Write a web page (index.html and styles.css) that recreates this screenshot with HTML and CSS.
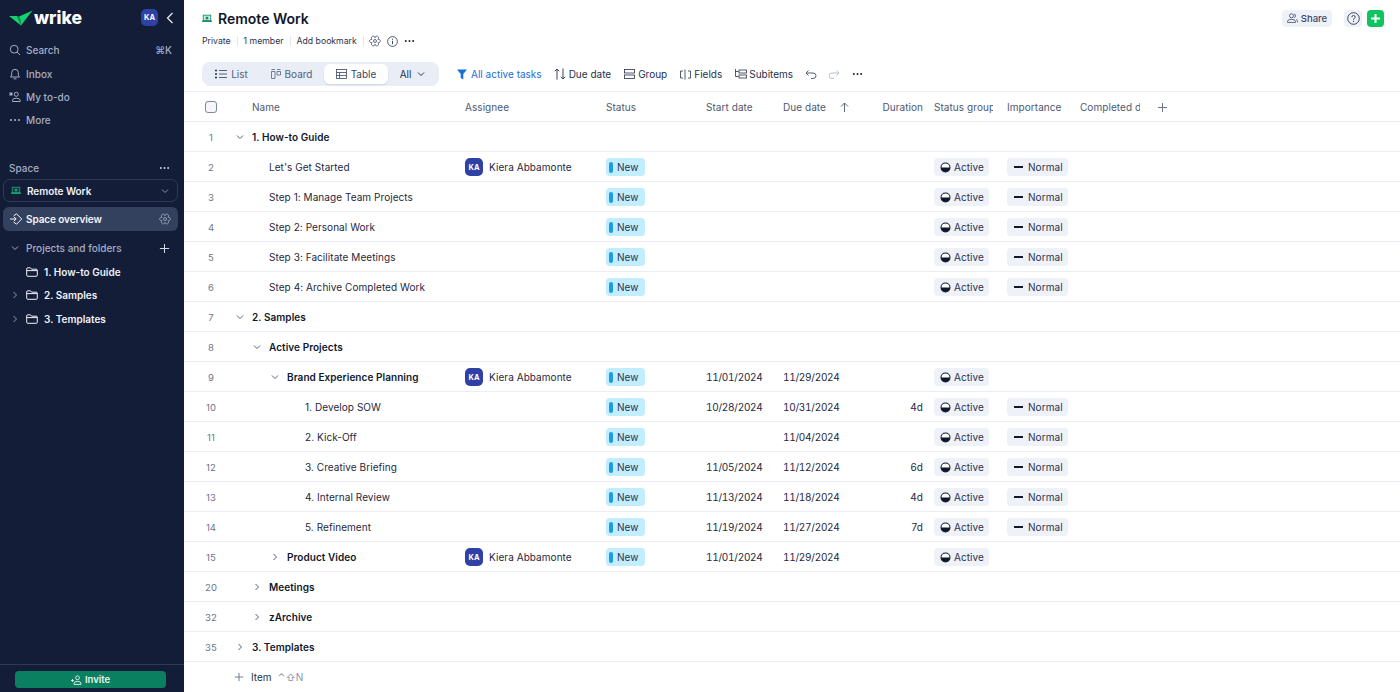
FILE: index.html
```html
<!DOCTYPE html>
<html lang="en">
<head>
<meta charset="utf-8">
<title>Remote Work</title>
<link rel="stylesheet" href="styles.css">
</head>
<body>
<svg class="defs" width="0" height="0" aria-hidden="true">
  <symbol id="down" viewBox="0 0 8 8"><path d="M1 2.5 4 5.5 7 2.5" fill="none" stroke="currentColor" stroke-width="1"/></symbol>
  <symbol id="right" viewBox="0 0 8 8"><path d="M2.5 1 5.5 4 2.5 7" fill="none" stroke="currentColor" stroke-width="1"/></symbol>
  <symbol id="plus" viewBox="0 0 12 12"><path d="M6 1v10M1 6h10" fill="none" stroke="currentColor" stroke-width="1.1"/></symbol>
  <symbol id="dots" viewBox="0 0 12 4"><circle cx="2" cy="2" r="1.1" fill="currentColor"/><circle cx="6" cy="2" r="1.1" fill="currentColor"/><circle cx="10" cy="2" r="1.1" fill="currentColor"/></symbol>
  <symbol id="folder" viewBox="0 0 12 10"><path d="M.7 2V8.2Q.7 9.3 1.8 9.3H10.2Q11.3 9.3 11.3 8.2V3.2Q11.3 2.2 10.2 2.2H5.6L4.4.8H1.8Q.7.8.7 2ZM.7 3.6H11.3" fill="none" stroke="currentColor" stroke-width="1"/></symbol>
  <symbol id="gear" viewBox="0 0 12 12"><path d="M8.94 4.3A1.8 1.8 0 1 1 8.94 7.7 1.8 1.8 0 1 1 6 9.4 1.8 1.8 0 1 1 3.06 7.7 1.8 1.8 0 1 1 3.06 4.3 1.8 1.8 0 1 1 6 2.6 1.8 1.8 0 1 1 8.94 4.3Z" fill="none" stroke="currentColor" stroke-width=".8"/><circle cx="6" cy="6" r="1.5" fill="none" stroke="currentColor" stroke-width=".8"/></symbol>
  <symbol id="half" viewBox="0 0 12 12"><circle cx="6" cy="6" r="4.9" fill="#fff" stroke="#10182c" stroke-width="1.1"/><path d="M1 6a5 5 0 0 0 10 0Z" fill="#10182c"/></symbol>
  <symbol id="space" viewBox="0 0 12 10"><rect class="screen" x="1.5" y="1" width="9" height="6.5"/><rect class="screen-base" x="0" y="7.5" width="12" height="1.6"/><rect class="screen-base" x="4.5" y="3" width="3" height="3"/></symbol>
</svg>

<div class="app">
  <aside class="sidebar">
    <div class="logo-row">
      <svg class="logo-mark" width="24" height="16" viewBox="0 0 24 16"><path d="M0 6H8L12 10.500V15.500Z" fill="#13d16d"/><path d="M10 6.500 23.500 .5 12 15.500Z" fill="#13d16d"/><path d="M8 6 10 6.500 12 10.500 12 15.500 9 9Z" fill="#0a8f50"/></svg>
      <span class="logo-text">wrike</span>
      <span class="avatar side-avatar">KA</span>
      <svg class="collapse" width="8" height="12" viewBox="0 0 8 12"><path d="M6.5 1 1.5 6 6.5 11" fill="none" stroke="currentColor" stroke-width="1.3"/></svg>
    </div>
    <nav class="nav">
      <div class="nav-item">
        <svg class="nav-icon" width="12" height="12" viewBox="0 0 12 12"><circle cx="5.2" cy="5.2" r="3.9" fill="none" stroke="currentColor"/><path d="M8 8 11 11" stroke="currentColor"/></svg>
        <span>Search</span><span class="shortcut">⌘K</span>
      </div>
      <div class="nav-item">
        <svg class="nav-icon" width="12" height="12" viewBox="0 0 12 12"><path d="M1.5 9h9L9.3 7.2V4.6a3.3 3.3 0 0 0-6.6 0v2.6ZM4.6 10.8h2.8" fill="none" stroke="currentColor"/></svg>
        <span>Inbox</span>
      </div>
      <div class="nav-item">
        <svg class="nav-icon" width="12" height="12" viewBox="0 0 12 12"><circle cx="7.3" cy="3.3" r="2" fill="none" stroke="currentColor"/><path d="M3.5 10.5V9.3Q3.5 7.2 7.3 7.2T11.2 9.3V10.5Z" fill="none" stroke="currentColor"/><rect x=".5" y="1.5" width="3" height="3" fill="currentColor"/></svg>
        <span>My to-do</span>
      </div>
      <div class="nav-item">
        <svg class="nav-icon" width="10" height="4" viewBox="0 0 12 4"><use href="#dots"/></svg>
        <span>More</span>
      </div>
    </nav>
    <div class="space-head"><span>Space</span><svg class="dots-icon" width="11" height="4"><use href="#dots"/></svg></div>
    <div class="space-select">
      <svg width="10" height="9"><use href="#space"/></svg>
      <span>Remote Work</span>
      <svg class="select-chev" width="8" height="8"><use href="#down"/></svg>
    </div>
    <div class="space-overview">
      <svg width="13" height="12" viewBox="0 0 13 12"><path d="M0 6H6M4 4 6.2 6 4 8M3.5 3 6.5.8 11.7 6 6.5 11.2 3.5 9" fill="none" stroke="currentColor"/></svg>
      <span>Space overview</span>
      <svg class="overview-gear" width="12" height="12"><use href="#gear"/></svg>
    </div>
    <div class="tree-head">
      <svg width="8" height="8"><use href="#down"/></svg>
      <span>Projects and folders</span>
      <svg class="tree-plus" width="11" height="11"><use href="#plus"/></svg>
    </div>
    <div class="tree-item"><span class="tree-chev"></span><svg width="12" height="10"><use href="#folder"/></svg><span>1. How-to Guide</span></div>
    <div class="tree-item"><svg class="tree-chev" width="8" height="8"><use href="#right"/></svg><svg width="12" height="10"><use href="#folder"/></svg><span>2. Samples</span></div>
    <div class="tree-item"><svg class="tree-chev" width="8" height="8"><use href="#right"/></svg><svg width="12" height="10"><use href="#folder"/></svg><span>3. Templates</span></div>
    <div class="invite-bar">
      <button class="invite">
        <svg width="11" height="10" viewBox="0 0 11 10"><circle cx="6.5" cy="2.8" r="1.9" fill="none" stroke="currentColor" stroke-width=".9"/><path d="M3 9.4V8.4Q3 6.4 6.5 6.4T10 8.4V9.4ZM0 5.5H3M1.5 4V7" fill="none" stroke="currentColor" stroke-width=".9"/></svg>
        Invite
      </button>
    </div>
  </aside>

  <main class="main">
    <header class="header">
      <div class="title-row">
        <svg width="10" height="9"><use href="#space"/></svg>
        <h1>Remote Work</h1>
        <div class="top-actions">
          <button class="share">
            <svg width="11" height="10" viewBox="0 0 11 10"><circle cx="4.5" cy="2.8" r="2" fill="none" stroke="currentColor" stroke-width=".8"/><path d="M.5 9.4V8.4Q.5 6.3 4.5 6.3T8.5 8.4V9.4ZM7 1Q8.8 1.4 8.5 3.2 8.3 4.3 7.2 4.7M9 6.3Q10.6 7 10.6 9.4" fill="none" stroke="currentColor" stroke-width=".8"/></svg>
            Share
          </button>
          <span class="help"><svg width="13" height="13" viewBox="0 0 13 13"><circle cx="6.5" cy="6.5" r="5.8" fill="none" stroke="currentColor"/><path d="M4.8 5.2Q4.8 3.5 6.5 3.5T8.2 5.1C8.2 6.3 6.5 6.3 6.5 7.8" fill="none" stroke="currentColor"/><circle cx="6.5" cy="9.4" r=".7" fill="currentColor"/></svg></span>
          <span class="add"><svg width="11" height="11" viewBox="0 0 11 11"><path d="M5.500 1V10M1 5.500H10" fill="none" stroke="currentColor" stroke-width="2"/></svg></span>
        </div>
      </div>
      <div class="meta-row">
        <span>Private</span><i class="sep"></i><span>1 member</span><i class="sep"></i><span>Add bookmark</span><i class="sep"></i>
        <svg class="meta-gear" width="12" height="12"><use href="#gear"/></svg>
        <svg class="meta-info" width="11" height="11" viewBox="0 0 11 11"><circle cx="5.5" cy="5.5" r="4.9" fill="none" stroke="currentColor" stroke-width=".9"/><path d="M5.5 4.8V8.2" stroke="currentColor"/><circle cx="5.5" cy="3.2" r=".6" fill="currentColor"/></svg>
        <svg class="meta-dots" width="11" height="4"><use href="#dots"/></svg>
      </div>
      <div class="toolbar">
        <div class="views">
          <span class="view view-list"><svg width="12" height="10" viewBox="0 0 12 10"><path d="M4 1.5H12M4 5H12M4 8.500H12" stroke="currentColor"/><path d="M0 1.500H2M0 5H2M0 8.500H2" stroke="#26304d" stroke-width="1.500"/></svg>List</span>
          <span class="view view-board"><svg width="10" height="10" viewBox="0 0 10 10"><path d="M.5.5H4M.5 2.500H4V9.500H.5ZM6 .5H9.500M6 2.500H9.500V6H6Z" fill="none" stroke="currentColor" stroke-width=".8"/></svg>Board</span>
          <span class="view view-table"><svg width="11" height="10" viewBox="0 0 11 10"><rect x=".5" y=".5" width="10" height="9" fill="none" stroke="currentColor" stroke-width=".8"/><path d="M.5 3.500H10.500M.5 6.500H10.500M3.500 3.500V9.500" fill="none" stroke="currentColor" stroke-width=".8"/></svg>Table</span>
          <span class="view view-all">All<svg width="8" height="8"><use href="#down"/></svg></span>
        </div>
        <span class="tool tool-filter"><svg width="10" height="11" viewBox="0 0 10 11"><path d="M0 .5H10L6.300 5V10.500L3.700 9V5Z" fill="currentColor"/></svg>All active tasks</span>
        <span class="tool tool-sort"><svg width="12" height="12" viewBox="0 0 12 12"><path d="M3 11.500V1M.8 3.200 3 1 5.200 3.200M9 .5V11M6.800 8.800 9 11 11.200 8.800" fill="none" stroke="currentColor" stroke-width=".9"/></svg>Due date</span>
        <span class="tool tool-group"><svg width="11" height="10" viewBox="0 0 11 10"><rect x=".5" y=".5" width="10" height="3.500" fill="none" stroke="currentColor" stroke-width=".8"/><rect x=".5" y="6" width="10" height="3.500" fill="none" stroke="currentColor" stroke-width=".8"/></svg>Group</span>
        <span class="tool tool-fields"><svg width="11" height="11" viewBox="0 0 11 11"><path d="M3 2H.5V9H3M8 2H10.500V9H8M5 .5V10.500" fill="none" stroke="currentColor" stroke-width=".8"/></svg>Fields</span>
        <span class="tool tool-sub"><svg width="12" height="10" viewBox="0 0 12 10"><path d="M.5 0V7.500H3.500M.5 2.500H3.500" fill="none" stroke="currentColor" stroke-width=".8"/><rect x="4" y="1" width="7.500" height="3" fill="none" stroke="currentColor" stroke-width=".8"/><rect x="4" y="6" width="7.500" height="3" fill="none" stroke="currentColor" stroke-width=".8"/></svg>Subitems</span>
        <svg class="undo" width="12" height="9" viewBox="0 0 12 9"><path d="M3.500.5 1 3 3.500 5.500M1 3H8Q11 3 11 5.700T8 8.500H6" fill="none" stroke="currentColor"/></svg>
        <svg class="redo" width="12" height="9" viewBox="0 0 12 9"><path d="M8.500.5 11 3 8.500 5.500M11 3H4Q1 3 1 5.700T4 8.500H6" fill="none" stroke="currentColor"/></svg>
        <svg class="tool-dots" width="11" height="4"><use href="#dots"/></svg>
      </div>
    </header>

    <section class="table">
      <div class="row head">
        <div class="num"><span class="check"></span></div>
        <div class="name-head">Name</div>
        <div>Assignee</div>
        <div>Status</div>
        <div>Start date</div>
        <div class="due-head">Due date<svg width="9" height="10" viewBox="0 0 9 10"><path d="M4.500 10V1M1 4.500 4.500 1 8 4.500" fill="none" stroke="currentColor" stroke-width=".9"/></svg></div>
        <div class="dur">Duration</div>
        <div class="sg"><div class="clip sg-clip">Status group</div></div>
        <div>Importance</div>
        <div class="clip comp-clip">Completed date</div>
        <svg class="col-add" width="11" height="11"><use href="#plus"/></svg>
      </div>

      <div class="row"><div class="num">1</div><div class="name l0 b"><svg width="8" height="8"><use href="#down"/></svg><span>1. How-to Guide</span></div></div>

      <div class="row"><div class="num">2</div><div class="name l1"><i class="nc"></i><span>Let's Get Started</span></div><div class="who"><span class="avatar">KA</span>Kiera Abbamonte</div><div><span class="pill new"><i></i>New</span></div><div></div><div></div><div></div><div class="sg"><span class="pill"><svg width="11" height="11"><use href="#half"/></svg>Active</span></div><div><span class="pill"><i class="dash"></i>Normal</span></div></div>
      <div class="row"><div class="num">3</div><div class="name l1"><i class="nc"></i><span>Step 1: Manage Team Projects</span></div><div></div><div><span class="pill new"><i></i>New</span></div><div></div><div></div><div></div><div class="sg"><span class="pill"><svg width="11" height="11"><use href="#half"/></svg>Active</span></div><div><span class="pill"><i class="dash"></i>Normal</span></div></div>
      <div class="row"><div class="num">4</div><div class="name l1"><i class="nc"></i><span>Step 2: Personal Work</span></div><div></div><div><span class="pill new"><i></i>New</span></div><div></div><div></div><div></div><div class="sg"><span class="pill"><svg width="11" height="11"><use href="#half"/></svg>Active</span></div><div><span class="pill"><i class="dash"></i>Normal</span></div></div>
      <div class="row"><div class="num">5</div><div class="name l1"><i class="nc"></i><span>Step 3: Facilitate Meetings</span></div><div></div><div><span class="pill new"><i></i>New</span></div><div></div><div></div><div></div><div class="sg"><span class="pill"><svg width="11" height="11"><use href="#half"/></svg>Active</span></div><div><span class="pill"><i class="dash"></i>Normal</span></div></div>
      <div class="row"><div class="num">6</div><div class="name l1"><i class="nc"></i><span>Step 4: Archive Completed Work</span></div><div></div><div><span class="pill new"><i></i>New</span></div><div></div><div></div><div></div><div class="sg"><span class="pill"><svg width="11" height="11"><use href="#half"/></svg>Active</span></div><div><span class="pill"><i class="dash"></i>Normal</span></div></div>

      <div class="row"><div class="num">7</div><div class="name l0 b"><svg width="8" height="8"><use href="#down"/></svg><span>2. Samples</span></div></div>
      <div class="row"><div class="num">8</div><div class="name l1 b"><svg width="8" height="8"><use href="#down"/></svg><span>Active Projects</span></div></div>

      <div class="row"><div class="num">9</div><div class="name l2 b"><svg width="8" height="8"><use href="#down"/></svg><span>Brand Experience Planning</span></div><div class="who"><span class="avatar">KA</span>Kiera Abbamonte</div><div><span class="pill new"><i></i>New</span></div><div class="date">11/01/2024</div><div class="date">11/29/2024</div><div></div><div class="sg"><span class="pill"><svg width="11" height="11"><use href="#half"/></svg>Active</span></div></div>

      <div class="row"><div class="num">10</div><div class="name l3"><i class="nc"></i><span>1. Develop SOW</span></div><div></div><div><span class="pill new"><i></i>New</span></div><div class="date">10/28/2024</div><div class="date">10/31/2024</div><div class="dur">4d</div><div class="sg"><span class="pill"><svg width="11" height="11"><use href="#half"/></svg>Active</span></div><div><span class="pill"><i class="dash"></i>Normal</span></div></div>
      <div class="row"><div class="num">11</div><div class="name l3"><i class="nc"></i><span>2. Kick-Off</span></div><div></div><div><span class="pill new"><i></i>New</span></div><div></div><div class="date">11/04/2024</div><div></div><div class="sg"><span class="pill"><svg width="11" height="11"><use href="#half"/></svg>Active</span></div><div><span class="pill"><i class="dash"></i>Normal</span></div></div>
      <div class="row"><div class="num">12</div><div class="name l3"><i class="nc"></i><span>3. Creative Briefing</span></div><div></div><div><span class="pill new"><i></i>New</span></div><div class="date">11/05/2024</div><div class="date">11/12/2024</div><div class="dur">6d</div><div class="sg"><span class="pill"><svg width="11" height="11"><use href="#half"/></svg>Active</span></div><div><span class="pill"><i class="dash"></i>Normal</span></div></div>
      <div class="row"><div class="num">13</div><div class="name l3"><i class="nc"></i><span>4. Internal Review</span></div><div></div><div><span class="pill new"><i></i>New</span></div><div class="date">11/13/2024</div><div class="date">11/18/2024</div><div class="dur">4d</div><div class="sg"><span class="pill"><svg width="11" height="11"><use href="#half"/></svg>Active</span></div><div><span class="pill"><i class="dash"></i>Normal</span></div></div>
      <div class="row"><div class="num">14</div><div class="name l3"><i class="nc"></i><span>5. Refinement</span></div><div></div><div><span class="pill new"><i></i>New</span></div><div class="date">11/19/2024</div><div class="date">11/27/2024</div><div class="dur">7d</div><div class="sg"><span class="pill"><svg width="11" height="11"><use href="#half"/></svg>Active</span></div><div><span class="pill"><i class="dash"></i>Normal</span></div></div>

      <div class="row"><div class="num">15</div><div class="name l2 b"><svg width="8" height="8"><use href="#right"/></svg><span>Product Video</span></div><div class="who"><span class="avatar">KA</span>Kiera Abbamonte</div><div><span class="pill new"><i></i>New</span></div><div class="date">11/01/2024</div><div class="date">11/29/2024</div><div></div><div class="sg"><span class="pill"><svg width="11" height="11"><use href="#half"/></svg>Active</span></div></div>

      <div class="row"><div class="num">20</div><div class="name l1 b"><svg width="8" height="8"><use href="#right"/></svg><span>Meetings</span></div></div>
      <div class="row"><div class="num">32</div><div class="name l1 b"><svg width="8" height="8"><use href="#right"/></svg><span>zArchive</span></div></div>
      <div class="row"><div class="num">35</div><div class="name l0 b"><svg width="8" height="8"><use href="#right"/></svg><span>3. Templates</span></div></div>

      <div class="add-row">
        <svg width="10" height="10"><use href="#plus"/></svg>
        <span class="add-label">Item</span>
        <span class="add-key">⌃⇧N</span>
      </div>
    </section>
  </main>
</div>
</body>
</html>
```
FILE: styles.css
```css
* { box-sizing: border-box; }
html, body { margin: 0; height: 100%; overflow: hidden; }
body { font-family: Inter, "Liberation Sans", "DejaVu Sans", sans-serif; font-size: 10px; color: #1f2740; background: #fff; }
.defs { position: absolute; }
svg { display: block; flex: none; }
button { font: inherit; border: 0; }
.app { display: flex; height: 692px; }
.screen { fill: var(--screen, #c5e9dc); stroke: var(--screen-line, #0f8a66); }
.screen-base { fill: var(--screen-line, #0f8a66); }

/* sidebar */
.sidebar { --screen: #17353f; --screen-line: #17a27b; width: 184px; flex: none; background: #141d38; color: #a4adc3; display: flex; flex-direction: column; font-weight: 500; }
.logo-row { height: 34px; display: flex; align-items: center; padding: 1px 10px 0 9px; color: #fff; }
.logo-text { font-size: 17.500px; font-weight: 800; margin-left: 1px; color: #fff; }
.avatar { width: 18px; height: 18px; border-radius: 5px; background: #2f41a6; color: #fff; font-size: 7.500px; font-weight: 700; display: inline-flex; align-items: center; justify-content: center; flex: none; }
.side-avatar { margin-left: auto; width: 17px; height: 17px; }
.collapse { margin-left: 8px; color: #e6e9f1; }
.nav { padding-top: 4.500px; }
.nav-item { height: 23.400px; display: flex; align-items: center; padding: 0 12px 0 9px; gap: 5px; }
.nav-icon { width: 12px; }
.shortcut { margin-left: auto; }
.space-head { display: flex; align-items: center; justify-content: space-between; padding: 0 14px 0 9px; margin-top: 29px; height: 14px; }
.dots-icon { color: #c9cfdd; }
.space-select { margin: 4px 6px 0 3px; height: 23px; border: 1px solid #2e3a58; border-radius: 7px; display: flex; align-items: center; gap: 6px; padding: 0 8px 0 7px; color: #eef1f7; font-weight: 600; letter-spacing: -.05px; }
.select-chev { margin-left: auto; color: #8a94ad; }
.space-overview { margin: 4.500px 6px 0 3px; height: 24px; border-radius: 6px; background: #33415f; display: flex; align-items: center; gap: 3px; padding: 0 7px 0 7px; color: #f3f5f9; font-weight: 600; letter-spacing: -.1px; }
.overview-gear { margin-left: auto; color: #a4adc3; }
.tree-head { display: flex; align-items: center; height: 23.400px; margin-top: 6px; padding: 0 14px 0 11px; gap: 7px; }
.tree-plus { margin-left: auto; color: #d3d8e4; }
.tree-item { display: flex; align-items: center; height: 23.600px; padding-left: 11px; color: #eef1f7; font-weight: 600; }
.tree-chev { width: 8px; height: 8px; margin-right: 7px; color: #8a94ad; }
.tree-item > span:last-child { margin-left: 6px; }
.invite-bar { margin-top: auto; border-top: 1px solid #2e3a58; height: 28px; padding: 6px 18px 0 15px; }
.invite { width: 100%; height: 17px; border-radius: 4px; background: #0a8060; color: #e8f5f0; display: flex; align-items: center; justify-content: center; gap: 3px; font-size: 9.500px; font-weight: 600; }

/* main */
.main { flex: 1; min-width: 0; display: flex; flex-direction: column; }
.header { height: 92px; padding: 8px 16px 0 18px; border-bottom: 1px solid #e9edf4; }
.title-row { display: flex; align-items: center; height: 20px; gap: 6px; }
.title-row h1 { margin: 0; font-size: 14px; font-weight: 600; color: #10182c; }
.top-actions { margin-left: auto; display: flex; align-items: center; }
.share { height: 17px; width: 50px; border-radius: 4px; background: #eef1f8; color: #3c4663; display: flex; align-items: center; justify-content: center; gap: 3px; font-size: 9.500px; font-weight: 500; }
.help { width: 18px; height: 17px; margin-left: 12px; border-radius: 4px; background: #eef1f8; color: #3c4663; display: flex; align-items: center; justify-content: center; }
.add { width: 17px; height: 17px; margin-left: 5px; border-radius: 4px; background: #0cc55f; color: #fff; display: flex; align-items: center; justify-content: center; }
.meta-row { display: flex; align-items: center; height: 18px; margin-top: 4px; font-size: 8.700px; color: #2a334d; }
.sep { width: 1px; height: 10px; background: #e3e7ef; margin: 0 6px; }
.meta-gear { color: #3c4663; margin-left: -1px; }
.meta-info { margin-left: 6px; color: #3c4663; }
.meta-dots { margin-left: 6px; color: #1b2338; }
.toolbar { display: flex; align-items: center; height: 24px; margin-top: 12px; font-weight: 400; }
.views { width: 237px; height: 24px; border-radius: 8px; background: #e9eef6; display: flex; align-items: center; padding: 0 2px; color: #55607d; flex: none; }
.view { display: flex; align-items: center; height: 20px; justify-content: center; gap: 4px; }
.view-list { width: 55px; }
.view-board { width: 65px; }
.view-table { width: 64px; background: #fff; border-radius: 6px; box-shadow: 0 1px 2px rgba(30,40,70,.12); color: #3c4663; }
.view-all { width: 49px; color: #26304d; gap: 6px; }
.tool { display: flex; align-items: center; gap: 3px; color: #26304d; white-space: nowrap; }
.tool-filter { margin-left: 18px; color: #1a6fd8; gap: 4px; }
.tool-sort { margin-left: 12px; }
.tool-group { margin-left: 13px; }
.tool-fields { margin-left: 13px; }
.tool-sub { margin-left: 13px; gap: 2px; }
.undo { margin-left: 12px; color: #55607d; }
.redo { margin-left: 11px; color: #b9c0cf; }
.tool-dots { margin-left: 12px; color: #1b2338; }

/* table */
.table { flex: 1; display: flex; flex-direction: column; }
.row { height: 30px; padding-top: 1px; flex: none; display: grid; grid-template-columns: 48px 233px 141px 100px 77px 77px 63px 84px 73px 75px 20px; align-items: center; border-bottom: 1px solid #e9edf4; white-space: nowrap; letter-spacing: .06px; }
.head { color: #4d5873; }
.date { font-variant-numeric: tabular-nums; letter-spacing: -.25px; }
.num { padding-left: 6px; text-align: center; font-size: 9.500px; color: #6a748d; display: flex; justify-content: center; }
.check { width: 12px; height: 12px; border: 1px solid #7d879f; border-radius: 3px; background: #f4f6fb; }
.name-head { padding-left: 20px; }
.due-head { display: flex; align-items: center; gap: 14px; }
.dur { text-align: right; }
.sg { padding-left: 11px; }
.clip { overflow: hidden; }
.sg-clip { width: 59px; }
.comp-clip { width: 60px; }
.col-add { color: #6a748d; margin-left: 2px; }
.name { display: flex; align-items: center; }
.name svg { margin-right: 8px; margin-left: 4px; color: #55607d; }
.nc { width: 20px; flex: none; }
.l1 { padding-left: 17px; }
.l2 { padding-left: 35px; }
.l3 { padding-left: 53px; }
.b { font-weight: 600; color: #10182c; }
.who { display: flex; align-items: center; gap: 6px; }
.pill { display: inline-flex; align-items: center; gap: 3px; height: 18px; padding: 0 5px 0 6px; border-radius: 4px; background: #eef1f8; color: #2a334d; vertical-align: middle; }
.new { background: #c2edff; padding: 0 6px 0 3px; gap: 4px; }
.new i { width: 4px; height: 11px; border-radius: 2px; background: #1a9ee0; }
.dash { width: 9px; height: 1.500px; background: #10182c; margin: 0 2px 0 1px; }
.add-row { display: flex; align-items: center; height: 30px; padding-left: 50px; }
.add-row svg { color: #6a748d; }
.add-label { margin-left: 7px; color: #26304d; }
.add-key { margin-left: 6px; color: #8a94ad; }
```
